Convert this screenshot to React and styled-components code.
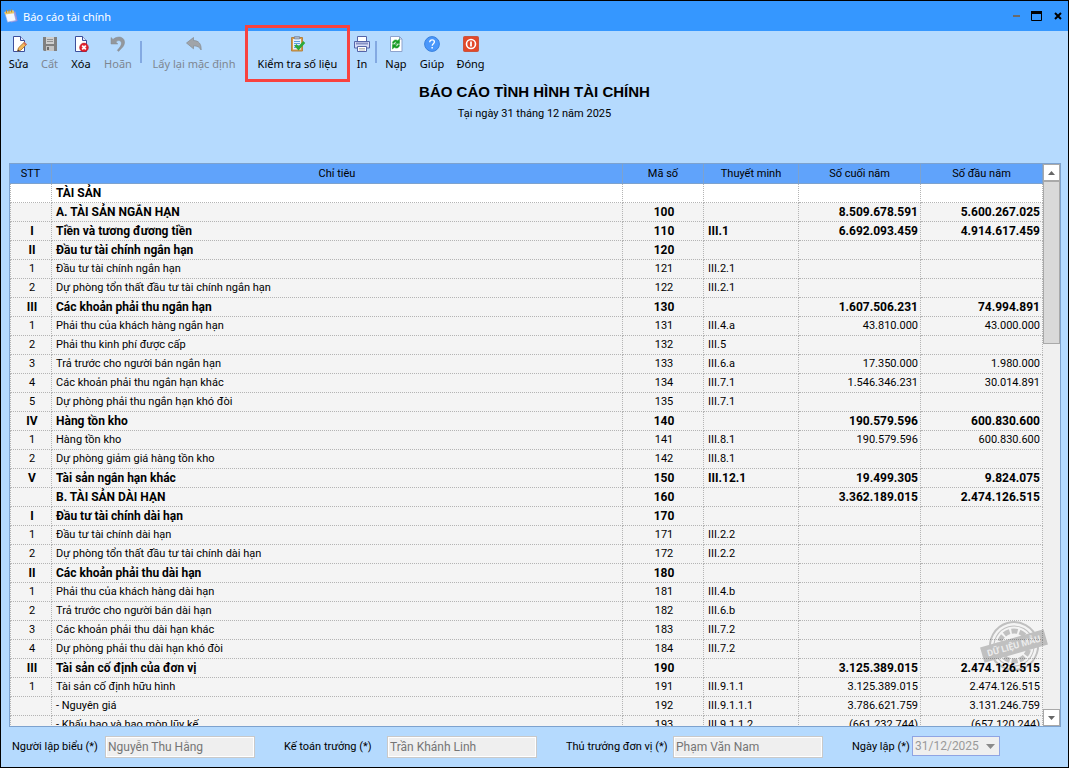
import { useRef } from 'react';
import styled, { createGlobalStyle } from 'styled-components';

const rows = [
  { name: 'TÀI SẢN', bold: true },
  { name: 'A. TÀI SẢN NGẮN HẠN', code: '100', end: '8.509.678.591', start: '5.600.267.025', bold: true },
  { no: 'I', name: 'Tiền và tương đương tiền', code: '110', note: 'III.1', end: '6.692.093.459', start: '4.914.617.459', bold: true },
  { no: 'II', name: 'Đầu tư tài chính ngắn hạn', code: '120', bold: true },
  { no: '1', name: 'Đầu tư tài chính ngắn hạn', code: '121', note: 'III.2.1' },
  { no: '2', name: 'Dự phòng tổn thất đầu tư tài chính ngắn hạn', code: '122', note: 'III.2.1' },
  { no: 'III', name: 'Các khoản phải thu ngắn hạn', code: '130', end: '1.607.506.231', start: '74.994.891', bold: true },
  { no: '1', name: 'Phải thu của khách hàng ngắn hạn', code: '131', note: 'III.4.a', end: '43.810.000', start: '43.000.000' },
  { no: '2', name: 'Phải thu kinh phí được cấp', code: '132', note: 'III.5' },
  { no: '3', name: 'Trả trước cho người bán ngắn hạn', code: '133', note: 'III.6.a', end: '17.350.000', start: '1.980.000' },
  { no: '4', name: 'Các khoản phải thu ngắn hạn khác', code: '134', note: 'III.7.1', end: '1.546.346.231', start: '30.014.891' },
  { no: '5', name: 'Dự phòng phải thu ngắn hạn khó đòi', code: '135', note: 'III.7.1' },
  { no: 'IV', name: 'Hàng tồn kho', code: '140', end: '190.579.596', start: '600.830.600', bold: true },
  { no: '1', name: 'Hàng tồn kho', code: '141', note: 'III.8.1', end: '190.579.596', start: '600.830.600' },
  { no: '2', name: 'Dự phòng giảm giá hàng tồn kho', code: '142', note: 'III.8.1' },
  { no: 'V', name: 'Tài sản ngắn hạn khác', code: '150', note: 'III.12.1', end: '19.499.305', start: '9.824.075', bold: true },
  { name: 'B. TÀI SẢN DÀI HẠN', code: '160', end: '3.362.189.015', start: '2.474.126.515', bold: true },
  { no: 'I', name: 'Đầu tư tài chính dài hạn', code: '170', bold: true },
  { no: '1', name: 'Đầu tư tài chính dài hạn', code: '171', note: 'III.2.2' },
  { no: '2', name: 'Dự phòng tổn thất đầu tư tài chính dài hạn', code: '172', note: 'III.2.2' },
  { no: 'II', name: 'Các khoản phải thu dài hạn', code: '180', bold: true },
  { no: '1', name: 'Phải thu của khách hàng dài hạn', code: '181', note: 'III.4.b' },
  { no: '2', name: 'Trả trước cho người bán dài hạn', code: '182', note: 'III.6.b' },
  { no: '3', name: 'Các khoản phải thu dài hạn khác', code: '183', note: 'III.7.2' },
  { no: '4', name: 'Dự phòng phải thu dài hạn khó đòi', code: '184', note: 'III.7.2' },
  { no: 'III', name: 'Tài sản cố định của đơn vị', code: '190', end: '3.125.389.015', start: '2.474.126.515', bold: true },
  { no: '1', name: 'Tài sản cố định hữu hình', code: '191', note: 'III.9.1.1', end: '3.125.389.015', start: '2.474.126.515' },
  { name: '- Nguyên giá', code: '192', note: 'III.9.1.1.1', end: '3.786.621.759', start: '3.131.246.759' },
  { name: '- Khấu hao và hao mòn lũy kế', code: '193', note: 'III.9.1.1.2', end: '(661.232.744)', start: '(657.120.244)' },
];

function PageShape() {
  return (
    <>
      <path d="M2.5 .5h7l4 4v11h-11z" fill="#fff" stroke="#3c4f9c" />
      <path d="M9.5 .5v4h4" fill="#dfe6fb" stroke="#3c4f9c" />
    </>
  );
}

function EditIcon() {
  return (
    <svg width="16" height="16" viewBox="0 0 16 16" aria-hidden="true">
      <PageShape />
      <path d="M6.5 15.2l1-3.4 5.8-5.6 2.3 2.3-5.8 5.7z" fill="#f3b95a" stroke="#9a6a2c" strokeWidth=".8" />
      <path d="M12.2 7.2l1.3-1.2 2.2 2.3-1.2 1.2z" fill="#d9705c" />
      <path d="M6.5 15.3l.6-1.9 1.3 1.3z" fill="#333" />
    </svg>
  );
}

function SaveIcon() {
  return (
    <svg width="16" height="16" viewBox="0 0 16 16" aria-hidden="true">
      <path d="M1 1h14v14H2l-1-1z" fill="#808080" />
      <path d="M4 1h8v7H4z" fill="#cfcfcf" />
      <path d="M5 3.5h6M5 5.5h6" stroke="#929292" />
      <path d="M4 10h8v5H4z" fill="#c4c4c4" />
      <path d="M5 11h2v3H5z" fill="#6c6c6c" />
    </svg>
  );
}

function DeleteIcon() {
  return (
    <svg width="16" height="16" viewBox="0 0 16 16" aria-hidden="true">
      <PageShape />
      <circle cx="11" cy="11.5" r="4.4" fill="#e0202c" stroke="#b3131e" strokeWidth=".5" />
      <path d="M9.2 9.7l3.6 3.6M12.800 9.7l-3.6 3.6" stroke="#fff" strokeWidth="1.7" />
    </svg>
  );
}

function UndoIcon() {
  return (
    <svg width="16" height="16" viewBox="0 0 16 16" aria-hidden="true">
      <path d="M1 1.5l2 1.9C6 1 10 .2 12.6 2.200c3 2.4 2.4 7-1.3 10.3L8.500 15.4 7.300 14.200c3-3 5.200-6.200 3.600-8.600C9.800 4 7.600 4.400 5.800 6l2 2H1z" fill="#93979c" stroke="#84888d" strokeWidth=".5" />
    </svg>
  );
}

function ReplyIcon() {
  return (
    <svg width="16" height="16" viewBox="0 0 16 16" aria-hidden="true">
      <path d="M.5 7L7.500 1.500v3c5 0 8 3.300 7.600 9.500-1.500-3-3.900-4.200-7.600-4.200v3z" fill="#a0a4a9" stroke="#85898e" strokeWidth=".7" />
    </svg>
  );
}

function CheckDataIcon() {
  return (
    <svg width="16" height="16" viewBox="0 0 16 16" aria-hidden="true">
      <path d="M1.500 1.500h11v13.500h-11z" fill="#d79b4a" stroke="#b58340" />
      <path d="M3 3h8v10.500H3z" fill="#e4f1ff" />
      <path d="M4 5.500h6M4 7.500h6M4 9.500h5M4 11.500h4" stroke="#5f9fe0" />
      <path d="M4.500 .5h5v2.500h-5z" fill="#a8b4c6" stroke="#6f7f9a" strokeWidth=".6" />
      <path d="M5.500 9l3 3.400L14.200 6" fill="none" stroke="#2da83a" strokeWidth="2.800" />
    </svg>
  );
}

function PrintIcon() {
  return (
    <svg width="16" height="16" viewBox="0 0 16 16" aria-hidden="true">
      <path d="M3.500 .5h9v5h-9z" fill="#fff" stroke="#5564a8" />
      <path d="M.5 5.500h15v6.500H.5z" fill="#d5dbf5" stroke="#5564a8" />
      <path d="M2 7.500h12" stroke="#8791c4" strokeWidth="2" />
      <path d="M3.500 10.500h9v5h-9z" fill="#fff" stroke="#5564a8" />
      <path d="M5 12.500h6M5 14h6" stroke="#a9a9a9" strokeWidth=".8" />
    </svg>
  );
}

function ReloadIcon() {
  return (
    <svg width="16" height="16" viewBox="0 0 16 16" aria-hidden="true">
      <path d="M2.500 .5h9l2.500 2.500v12.500H2.500z" fill="#fff" stroke="#8ea3cc" />
      <path d="M11.500 .5v2.500H14" fill="none" stroke="#8ea3cc" />
      <path d="M4.500 7.300c0-3 3.200-4.300 5.200-2.600L11.500 3v4.500H7l1.500-1.500C7.500 5.400 6.200 5.800 6 7.300z" fill="#149a22" stroke="#149a22" strokeWidth=".5" />
      <path d="M11.500 8.700c0 3-3.200 4.300-5.200 2.600L4.500 13V8.500H9L7.500 10c1 .6 2.300.2 2.500-1.300z" fill="#149a22" stroke="#149a22" strokeWidth=".5" />
    </svg>
  );
}

function HelpIcon() {
  return (
    <svg width="16" height="16" viewBox="0 0 16 16" aria-hidden="true">
      <circle cx="8" cy="8" r="7.400" fill="#4a97fb" stroke="#3a80dc" />
      <path d="M5.700 6.200c0-1.500 1-2.400 2.400-2.400s2.300.9 2.300 2.100c0 1.700-2.200 1.900-2.200 3.900" fill="none" stroke="#fff" strokeWidth="1.300" />
      <path d="M7.400 11h1.500v1.500H7.400z" fill="#fff" />
    </svg>
  );
}

function PowerIcon() {
  return (
    <svg width="16" height="16" viewBox="0 0 16 16" aria-hidden="true">
      <rect x=".5" y=".5" width="15" height="15" rx="1" fill="#e2492b" stroke="#c9553f" />
      <circle cx="8" cy="8" r="4.500" fill="none" stroke="#fff" strokeWidth="1.600" />
      <path d="M8 5.500v5" stroke="#fff" strokeWidth="1.800" />
    </svg>
  );
}

function AppIcon() {
  return (
    <svg width="14" height="14" viewBox="0 0 14 14" aria-hidden="true">
      <path d="M4 4l7.500-1.500L13.500 12 7 13.500z" fill="#a58fd8" />
      <path d="M.5 3l9-1.500L12 11.500l-8.500 1.700z" fill="#f4f7ff" stroke="#7fa3e8" strokeWidth=".6" />
      <path d="M.5 3l9-1.500.6 2.700L1 5.500z" fill="#ecc763" />
      <path d="M2.500 1v3M5 .6v3M7.500 .3v3" stroke="#b58e3c" />
    </svg>
  );
}

function Stamp() {
  return (
    <StampSvg viewBox="0 0 68 54" aria-hidden="true">
      <g transform="rotate(-16 34 27)" fill="none" stroke="#c9c9c9">
        <circle cx="34" cy="27" r="24" strokeWidth="2" />
        <circle cx="34" cy="27" r="20" strokeWidth="1" />
        <circle cx="34" cy="27" r="15" strokeWidth="5" strokeDasharray="6 2" />
        <rect x="1" y="19" width="66" height="16" fill="#c9c9c9" stroke="none" />
        <text x="34" y="30" textAnchor="middle" fill="#f7f7f7" stroke="none" fontSize="9" fontWeight="bold">
          DỮ LIỆU MẪU
        </text>
      </g>
    </StampSvg>
  );
}

function ToolButton({ icon, label, width, disabled, marked }) {
  return (
    <ToolButtonStyle type="button" $width={width} $marked={marked} disabled={disabled}>
      {icon}
      <span>{label}</span>
    </ToolButtonStyle>
  );
}

function SignerField({ id, label, labelWidth, value }) {
  return (
    <Field $labelWidth={labelWidth}>
      <label htmlFor={id}>{label}</label>
      <TextBox id={id} defaultValue={value} disabled />
    </Field>
  );
}

function ReportTable() {
  const paneRef = useRef(null);
  const scroll = (top) => paneRef.current.scrollBy({ top });

  return (
    <TableFrame>
      <TablePane ref={paneRef}>
        <Table>
          <colgroup>
            <Col $width={42} />
            <Col />
            <Col $width={81} />
            <Col $width={95} />
            <Col $width={122} />
            <Col $width={122} />
          </colgroup>
          <thead>
            <tr>
              <th>STT</th>
              <th>Chỉ tiêu</th>
              <th>Mã số</th>
              <th>Thuyết minh</th>
              <th>Số cuối năm</th>
              <th>Số đầu năm</th>
            </tr>
          </thead>
          <tbody>
            {rows.map((row, index) => (
              <Row key={index} $bold={row.bold}>
                <Cell $align="center">{row.no}</Cell>
                <Cell>{row.name}</Cell>
                <Cell $align="center">{row.code}</Cell>
                <Cell>{row.note}</Cell>
                <Cell $align="right">{row.end}</Cell>
                <Cell $align="right">{row.start}</Cell>
              </Row>
            ))}
          </tbody>
        </Table>
      </TablePane>
      <ScrollTrack>
        <ScrollButton type="button" aria-label="Lên" onClick={() => scroll(-19)}>
          <svg width="7" height="4" viewBox="0 0 7 4"><path d="M0 4l3.500-4L7 4z" fill="#666" /></svg>
        </ScrollButton>
        <ScrollThumb />
        <ScrollButton type="button" aria-label="Xuống" onClick={() => scroll(19)}>
          <svg width="7" height="4" viewBox="0 0 7 4"><path d="M0 0l3.500 4L7 0z" fill="#666" /></svg>
        </ScrollButton>
      </ScrollTrack>
      <Stamp />
    </TableFrame>
  );
}

export default function App() {
  return (
    <Window>
      <GlobalStyle />
      <TitleBar>
        <AppIcon />
        <h1>Báo cáo tài chính</h1>
        <WindowButton type="button" aria-label="Thu nhỏ">
          <svg width="12" height="12" viewBox="0 0 12 12"><path d="M3 5h7v2H3z" fill="#6a6a6a" /></svg>
        </WindowButton>
        <WindowButton type="button" aria-label="Phóng to">
          <svg width="12" height="12" viewBox="0 0 12 12"><path d="M.5 1.500h10v9H.5z" fill="none" stroke="#000" /><path d="M0 1h11v3H0z" /></svg>
        </WindowButton>
        <WindowButton type="button" aria-label="Đóng cửa sổ">
          <svg width="12" height="12" viewBox="0 0 12 12"><path d="M3 3l6 6M9 3l-6 6" stroke="#000" strokeWidth="2" /></svg>
        </WindowButton>
      </TitleBar>
      <Toolbar>
        <ToolButton icon={<EditIcon />} label="Sửa" width={31} />
        <ToolButton icon={<SaveIcon />} label="Cất" width={31} disabled />
        <ToolButton icon={<DeleteIcon />} label="Xóa" width={32} />
        <ToolButton icon={<UndoIcon />} label="Hoãn" width={42} disabled />
        <Separator />
        <ToolButton icon={<ReplyIcon />} label="Lấy lại mặc định" width={102} disabled />
        <ToolButton icon={<CheckDataIcon />} label="Kiểm tra số liệu" width={105} marked />
        <ToolButton icon={<PrintIcon />} label="In" width={24} />
        <Separator />
        <ToolButton icon={<ReloadIcon />} label="Nạp" width={36} />
        <ToolButton icon={<HelpIcon />} label="Giúp" width={36} />
        <ToolButton icon={<PowerIcon />} label="Đóng" width={41} />
      </Toolbar>
      <Heading>
        <h2>BÁO CÁO TÌNH HÌNH TÀI CHÍNH</h2>
        <p>Tại ngày 31 tháng 12 năm 2025</p>
      </Heading>
      <ReportTable />
      <Footer>
        <SignerField id="preparer" label="Người lập biểu (*)" labelWidth={93} value="Nguyễn Thu Hằng" />
        <SignerField id="accountant" label="Kế toán trưởng (*)" labelWidth={103} value="Trần Khánh Linh" />
        <SignerField id="director" label="Thủ trưởng đơn vị (*)" labelWidth={107} value="Phạm Văn Nam" />
        <Field $labelWidth={60}>
          <label htmlFor="date">Ngày lập (*)</label>
          <DateSelectWrap>
            <DateSelect id="date" disabled>
              <option>31/12/2025</option>
            </DateSelect>
            <svg width="9" height="5" viewBox="0 0 9 5"><path d="M0 0h9L4.500 5z" fill="#8a8a8a" /></svg>
          </DateSelectWrap>
        </Field>
      </Footer>
    </Window>
  );
}

const GlobalStyle = createGlobalStyle`
  * {
    box-sizing: border-box;
  }

  body {
    margin: 0;
    color: #000;
    font: 11px Roboto, 'Liberation Sans', sans-serif;
  }

  button {
    padding: 0;
    border: 0;
    background: none;
    font: inherit;
  }
`;

const Window = styled.main`
  display: flex;
  flex-direction: column;
  height: 100vh;
  border: 1px solid #000;
  background: #b5dafe;
`;

const TitleBar = styled.header`
  display: flex;
  flex: none;
  align-items: center;
  gap: 9px;
  height: 30px;
  padding: 0 4px 0 3px;
  background: #3597ff;

  h1 {
    flex: 1;
    margin: 0 0 0 -4px;
    color: #fff;
    font: 11px 'Noto Sans', sans-serif;
  }
`;

const WindowButton = styled.button`
  display: grid;
  place-items: center;
  width: 12px;
  height: 16px;
`;

const Toolbar = styled.nav`
  display: flex;
  flex: none;
  height: 48px;
  padding-left: 2px;
  font: 11px 'Noto Sans', sans-serif;
`;

const ToolButtonStyle = styled.button`
  position: relative;
  display: flex;
  flex: none;
  flex-direction: column;
  align-items: center;
  gap: 4px;
  width: ${({ $width }) => $width}px;
  padding-top: 5px;
  color: #000;
  line-height: 16px;
  white-space: nowrap;

  &:disabled {
    color: #7d8691;
  }

  &::after {
    content: '';
    display: ${({ $marked }) => ($marked ? 'block' : 'none')};
    position: absolute;
    inset: -6px 0 -3px;
    border: 3px solid #f8423f;
  }
`;

const Separator = styled.span`
  width: 2px;
  height: 22px;
  margin: 10px 1px 0;
  background: #83a9e2;
`;

const Heading = styled.section`
  flex: none;
  height: 84px;
  padding-top: 4px;
  text-align: center;

  h2 {
    margin: 0;
    font: bold 15px/18px 'Liberation Sans', Arial, sans-serif;
  }

  p {
    margin: 5px 0 0;
    line-height: 16px;
  }
`;

const TableFrame = styled.section`
  position: relative;
  display: flex;
  flex: 1;
  min-height: 0;
  margin: 0 7px 0 8px;
  border: 1px solid #7da2ce;
`;

const TablePane = styled.div`
  flex: 1;
  overflow-y: auto;
  background: #f4f4f4;
  scrollbar-width: none;
`;

const Table = styled.table`
  width: 100%;
  border-spacing: 0;
  table-layout: fixed;

  th {
    position: sticky;
    top: 0;
    height: 20px;
    padding: 0;
    border-right: 1px solid #7da2ce;
    border-bottom: 1px solid #7da2ce;
    background: #60a3fb;
    font-weight: normal;
  }
`;

const Col = styled.col`
  width: ${({ $width }) => ($width ? `${$width}px` : 'auto')};
`;

const Row = styled.tr`
  font-size: ${({ $bold }) => ($bold ? 12 : 11)}px;
  font-weight: ${({ $bold }) => ($bold ? 'bold' : 'normal')};

  &:first-child {
    background: #fff;
  }
`;

const Cell = styled.td`
  height: 19px;
  padding: 0 2px 0 4px;
  border-right: 1px dotted #b4b4b4;
  border-bottom: 1px dotted #b4b4b4;
  line-height: 18px;
  text-align: ${({ $align }) => $align || 'left'};
  white-space: nowrap;

  &:first-child {
    border-left: 1px dotted #b4b4b4;
  }
`;

const ScrollTrack = styled.div`
  display: flex;
  flex: none;
  flex-direction: column;
  width: 17px;
  background: #f0f0f0;
`;

const ScrollButton = styled.button`
  display: grid;
  flex: none;
  place-items: center;
  height: 17px;
  border: 1px solid #a9a9a9;
  background: #fff;

  &:last-child {
    margin-top: auto;
  }
`;

const ScrollThumb = styled.div`
  height: 29%;
  border: 1px solid #a9a9a9;
  background: #d9d9d9;
`;

const StampSvg = styled.svg`
  position: absolute;
  right: 12px;
  bottom: 53px;
  width: 68px;
  height: 54px;
  mix-blend-mode: multiply;
  pointer-events: none;
`;

const Footer = styled.footer`
  display: flex;
  flex: none;
  gap: 29px;
  height: 40px;
  padding: 9px 11px 0;
`;

const Field = styled.div`
  display: grid;
  grid-template-columns: ${({ $labelWidth }) => $labelWidth}px auto;
  height: 20px;
  line-height: 22px;
  white-space: nowrap;
`;

const TextBox = styled.input`
  width: 150px;
  padding: 0 2px;
  border: 1px solid #c9c9c9;
  background: #efefef;
  box-shadow: inset 0 0 0 1px #fff;
  color: #757575;
  font: 12px Roboto, 'Liberation Sans', sans-serif;
`;

const DateSelectWrap = styled.div`
  position: relative;

  svg {
    position: absolute;
    top: 8px;
    right: 5px;
  }
`;

const DateSelect = styled.select`
  width: 88px;
  height: 20px;
  padding: 0 2px;
  border: 1px solid #8fa4e3;
  border-radius: 0;
  appearance: none;
  background: #efefef;
  color: #9a9a9a;
  font: 12px Roboto, 'Liberation Sans', sans-serif;
  opacity: 1;
`;
